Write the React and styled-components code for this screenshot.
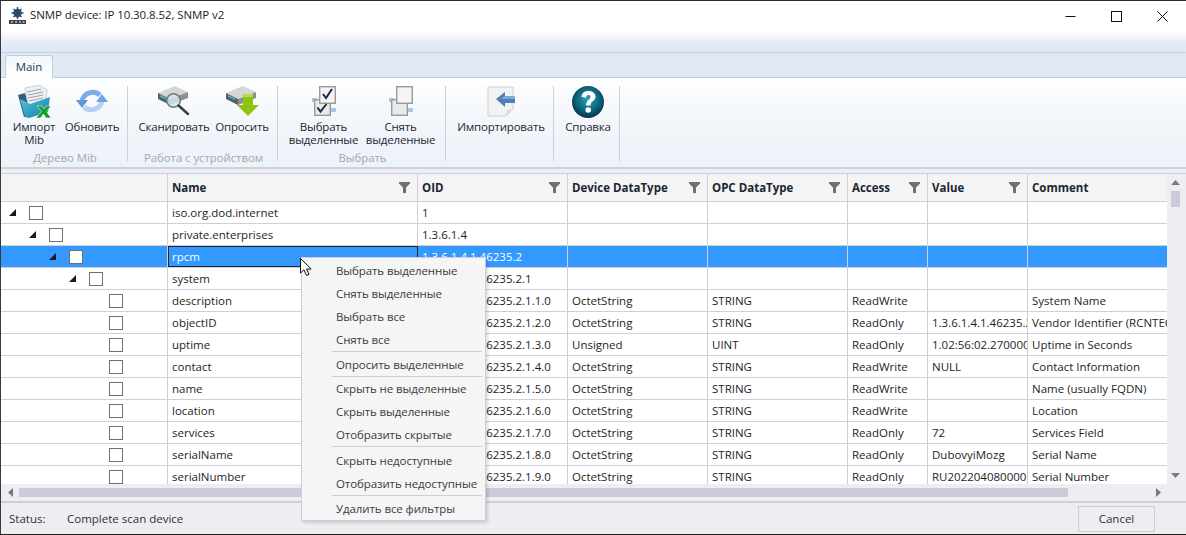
import React from "react";
import styled, { createGlobalStyle } from "styled-components";

const Global = createGlobalStyle`
  html, body { margin: 0; padding: 0; background: #eeeef2; overflow: hidden; }
  * { box-sizing: border-box; }
`;

const Win = styled.div`
  position: relative;
  width: 1186px;
  height: 535px;
  display: flex;
  flex-direction: column;
  overflow: hidden;
  background: #eeeef2;
  border-top: 1px solid #2a2a2a;
  border-bottom: 1px solid #222;
  border-left: 1px solid #3a3a3a;
  font-family: "Open Sans", "Noto Sans", sans-serif;
  font-size: 11.5px;
  color: #1e1e1e;
`;
const TitleBar = styled.div`
  height: 52px;
  flex: none;
  display: flex;
  align-items: flex-start;
  background: linear-gradient(#fff 0, #fff 30px, #e0e9f5 44px, #dfe8f4 100%);
  border-bottom: 1px solid #c3cfde;
`;
const TitleText = styled.div`
  margin: 6px 0 0 4px;
  font-size: 11.5px;
  line-height: 16px;
  letter-spacing: -0.08px;
  flex: 1;
`;
const Logo = styled.svg`
  margin: 6px 0 0 8px;
  flex: none;
`;
const WinButtons = styled.div`
  display: flex;
  margin-right: 1px;
`;
const WinButton = styled.div`
  width: 46px;
  height: 30px;
  display: flex;
  align-items: center;
  justify-content: center;
`;
const TabStrip = styled.div`
  height: 25px;
  flex: none;
  background: #dfe8f4;
  padding: 3px 0 0 4px;
  display: flex;
  align-items: flex-end;
  border-bottom: 1px solid #c3cfde;
`;
const Tab = styled.div`
  width: 48px;
  height: 23px;
  margin-bottom: -1px;
  background: linear-gradient(#f3f7fb, #fff);
  border: 1px solid #c3cfde;
  border-bottom: none;
  border-radius: 3px 3px 0 0;
  text-align: center;
  line-height: 21px;
  font-size: 11.5px;
  color: #1e3a55;
`;
const Ribbon = styled.div`
  height: 91px;
  flex: none;
  display: flex;
  padding-top: 8px;
  background: linear-gradient(#fff 0, #f4f7fb 40%, #edf2f9 100%);
  border-bottom: 2px solid #c9d3e0;
`;
const Group = styled.div`
  height: 75px;
  width: ${(p) => p.$width}px;
  padding-left: ${(p) => p.$pad}px;
  border-right: 1px solid #c9d0da;
`;
const GroupRow = styled.div`
  display: flex;
  height: 65px;
`;
const GroupLabel = styled.div`
  margin-left: ${(p) => -p.$pad + 2}px;
  text-align: center;
  line-height: 14px;
  font-size: 11.4px;
  letter-spacing: -0.05px;
  color: #a3a7ad;
`;
const RibbonBtn = styled.div`
  width: ${(p) => p.$w}px;
  display: flex;
  flex-direction: column;
  align-items: center;
  text-align: center;
`;
const IconBox = styled.div`
  height: 35px;
  margin-top: -1px;
  display: flex;
  align-items: flex-start;
  justify-content: center;
`;
const BtnLabel = styled.div`
  line-height: 13px;
  white-space: pre-line;
  letter-spacing: -0.2px;
  color: #1d2733;
`;
const GridWrap = styled.div`
  flex: none;
  margin-top: 4px;
  height: 328px;
  border-top: 1px solid #cfcfdc;
  display: grid;
  grid-template-columns: 1166px 19px;
  grid-template-rows: 310px 17px;
  background: #eeeef2;
`;
const GridArea = styled.div`
  overflow: hidden;
  background: #fff;
`;
const Row = styled.div`
  display: grid;
  grid-template-columns: 167px 250px 150px 140px 140px 80px 100px 140px;
  height: ${(p) => (p.$head ? 28 : 22)}px;
  background: ${(p) => (p.$head ? "#f4f4f5" : p.$sel ? "#3399ff" : "#fff")};
  border-bottom: 1px solid #cfcfdc;
`;
const Cell = styled.div`
  border-right: 1px solid #cfcfdc;
  padding-left: 4px;
  line-height: 22px;
  white-space: nowrap;
  overflow: hidden;
  color: ${(p) => (p.$sel ? "#fff" : "#1e1e1e")};
  ${(p) => p.$focus && "outline: 1px solid #1c2530; outline-offset: -1px;"}
`;
const TreeCell = styled.div`
  border-right: 1px solid #cfcfdc;
  padding-left: ${(p) => 8 + p.$level * 20}px;
  display: flex;
  align-items: center;
  height: 21px;
`;
const Expander = styled.svg`
  width: 7px;
  height: 7px;
  flex: none;
  margin-right: 13px;
`;
const LeafGap = styled.div`
  width: 20px;
  flex: none;
`;
const Check = styled.div`
  width: 14px;
  height: 14px;
  flex: none;
  background: #fff;
  border: 1px solid #707070;
`;
const HeadCell = styled.div`
  border-right: 1px solid #cfcfdc;
  padding: 0 7px 0 4px;
  display: flex;
  align-items: center;
  justify-content: space-between;
  font-weight: 700;
  font-size: 11.5px;
  color: #1c2733;
`;
const VScroll = styled.div`
  grid-row: 1;
  grid-column: 2;
  background: #eeeef2;
  display: flex;
  flex-direction: column;
  align-items: center;
  padding: 6px 2px 0 0;
`;
const VThumb = styled.div`
  width: 9px;
  height: 16px;
  margin-top: 6px;
  background: #c9cbd9;
`;
const VSpacer = styled.div`
  flex: 1;
`;
const HScroll = styled.div`
  grid-row: 2;
  grid-column: 1 / 3;
  background: #eeeef2;
  display: flex;
  align-items: center;
  padding-left: 7px;
`;
const HThumb = styled.div`
  width: 1049px;
  height: 9px;
  margin-left: 6px;
  background: #c9cbd9;
`;
const Arrow = styled.svg`
  flex: none;
  margin-left: ${(p) => p.$ml || 0}px;
  margin-bottom: ${(p) => p.$mb || 0}px;
`;
const Status = styled.div`
  flex: 1;
  display: flex;
  align-items: center;
  padding: 0 31px 0 8px;
  background: #eeeef2;
  border-top: 2px solid #cfcfdc;
`;
const StatusLabel = styled.div`
  width: 58px;
  color: #2a3340;
`;
const StatusText = styled.div`
  flex: 1;
  color: #2a3340;
`;
const CancelBtn = styled.div`
  width: 77px;
  height: 26px;
  border: 1px solid #cccedb;
  background: #eeeef2;
  text-align: center;
  line-height: 24px;
  color: #2a3340;
`;
const Menu = styled.div`
  position: absolute;
  left: 300px;
  top: 256px;
  width: 185px;
  height: 264px;
  padding: 1px 2px;
  background: #f5f5f5;
  border: 1px solid #cccedb;
  box-shadow: 2px 2px 3px rgba(0,0,0,.14);
`;
const MenuItem = styled.div`
  height: 23px;
  line-height: 23px;
  padding-left: 32px;
  white-space: nowrap;
  letter-spacing: -0.1px;
  color: #3c3c3c;
`;
const MenuSep = styled.div`
  height: 1px;
  margin: 0 1px ${(p) => p.$mb || 0}px 28px;
  background: #cccedb;
`;
const Pointer = styled.svg`
  position: absolute;
  left: 299px;
  top: 257px;
`;

const Funnel = () => (
  <svg width="11" height="11" viewBox="0 0 11 11"><path d="M0 0H11V1.6L7 5.6V11H4V5.6L0 1.6Z" fill="#6f6f6f" /></svg>
);

const ImportIcon = () => (
  <svg width="34" height="34" viewBox="0 0 34 34">
    <defs><linearGradient id="fd" x1="0" y1="0" x2="1" y2="1"><stop offset="0" stopColor="#57c6e2" /><stop offset="1" stopColor="#0f7f9f" /></linearGradient></defs>
    <path d="M1 10L8 8L14 31L7 32Z" fill="#2f5e7e" />
    <path d="M8 3L22 0L30 5L28 20L12 24Z" fill="#eef0f2" stroke="#aab2ba" strokeWidth=".6" />
    <path d="M10 7L24 4M11 10L26 7M11 13L26 10M12 16L26 13" stroke="#9aa3ab" strokeWidth="1" />
    <path d="M3 14L13 19L33 12L31 27L12 33L8 32Z" fill="url(#fd)" />
    <path d="M20 21H25L27 24L29.5 21H34L29.5 26.5L34 33H29L26.5 29L23.5 33H19L24.5 26.5Z" fill="#12a02c" stroke="#fff" strokeWidth=".5" />
  </svg>
);
const RefreshIcon = () => (
  <svg width="32" height="30" viewBox="0 -3 32 30">
    <path d="M24 7A11 11 0 0 0 6 13" fill="none" stroke="#7aace8" strokeWidth="5" />
    <path d="M0 12H12L6 20Z" fill="#5f97dd" />
    <path d="M8 19A11 11 0 0 0 26 13" fill="none" stroke="#b3d1f2" strokeWidth="5" />
    <path d="M20 14H32L26 6Z" fill="#6fa4e4" />
  </svg>
);
const DeviceShape = () => (
  <>
    <path d="M1 8L18 1L31 7L13 14Z" fill="#d4d6d8" />
    <path d="M1 8L13 14V20L1 14Z" fill="#5a6166" />
    <path d="M13 14L31 7V13L13 20Z" fill="#8b9093" />
    <path d="M3 10L10 13.5V15L3 11.5Z" fill="#45c6d4" />
  </>
);
const ScanIcon = () => (
  <svg width="34" height="34" viewBox="0 0 34 34">
    <DeviceShape />
    <circle cx="16.5" cy="15.5" r="6.8" fill="#cfe6e6" fillOpacity=".85" stroke="#70787c" strokeWidth="1.5" />
    <path d="M21.5 20.5L31 29" stroke="#3b3f42" strokeWidth="2.4" strokeLinecap="round" />
  </svg>
);
const PollIcon = () => (
  <svg width="34" height="34" viewBox="0 0 34 34">
    <DeviceShape />
    <path d="M18 9H28V20H34L23 31L12 20H18Z" fill="#8cc414" />
    <path d="M18 9H28V12H18Z" fill="#b4e03a" />
  </svg>
);
const CheckPair = ({ checked }) => (
  <svg width="26" height="31" viewBox="0 0 26 31">
    <path d="M1 13H6V17H1ZM19 23H25V27H19Z" fill="#a8c8e8" />
    <rect x="3.7" y="14.7" width="15.6" height="15.6" fill="#e9e9e9" stroke="#9a9a9a" strokeWidth="1.4" />
    <rect x="8.7" y="1.7" width="15.6" height="16.6" fill="#f4f4f4" stroke="#9a9a9a" strokeWidth="1.4" />
    {checked && <path d="M12 9L15 13L21 4" fill="none" stroke="#1d2a44" strokeWidth="2" />}
    {checked && <path d="M6.5 22.5L9.5 26.5L15.5 19" fill="none" stroke="#1d2a44" strokeWidth="2" />}
  </svg>
);
const ImportDocIcon = () => (
  <svg width="28" height="32" viewBox="0 0 28 32">
    <path d="M1 2H26V24L19 31H1Z" fill="#f2f2f2" stroke="#cfcfcf" />
    <path d="M19 31L20 25L26 24Z" fill="#dcdcdc" />
    <path d="M9 14L18 7V11H28V18H18V22Z" fill="#4f7fb5" />
    <path d="M18 11H28V14H14Z" fill="#7fa9d6" />
  </svg>
);
const HelpIcon = () => (
  <svg width="34" height="34" viewBox="0 0 34 34">
    <defs>
      <radialGradient id="hg" cx=".5" cy=".42" r=".6"><stop offset="0" stopColor="#2aa5b8" /><stop offset=".65" stopColor="#0c5d78" /><stop offset="1" stopColor="#052f42" /></radialGradient>
    </defs>
    <circle cx="17" cy="17" r="16" fill="url(#hg)" />
    <path d="M10.5 12C11 7.5 14 6 17.5 6C22 6 24.5 8.5 24.5 11.5C24.5 16 19.5 16 19.5 20.5H15C14.8 15.5 19.5 14.5 19.5 12C19.5 10.5 18.5 10 17.3 10C16 10 15.2 11 15 12.8Z" fill="#fff" />
    <circle cx="17.2" cy="25" r="2.8" fill="#fff" />
  </svg>
);
const LogoIcon = () => (
  <Logo width="17" height="18" viewBox="0 0 17 18">
    <circle cx="8.5" cy="6" r="4.2" fill="#2c4a6a" />
    <circle cx="8.5" cy="6" r="1.5" fill="#cfd8e2" />
    <path d="M8.5 0V12M2.5 6H14.5M4.5 2L12.5 10M12.5 2L4.5 10" stroke="#2c4a6a" strokeWidth="1.4" />
    <rect x="0" y="13" width="17" height="4" fill="#3a4048" />
    <path d="M2 15H4M6 15H8M10 15H12M13.5 15H15.5" stroke="#fff" strokeWidth="1" />
  </Logo>
);

const columns = ["Name", "OID", "Device DataType", "OPC DataType", "Access", "Value", "Comment"];
const pre = "1.3.6.1.4.1.46235.2.1.";
const rows = [
  { level: 0, exp: 1, name: "iso.org.dod.internet", oid: "1" },
  { level: 1, exp: 1, name: "private.enterprises", oid: "1.3.6.1.4" },
  { level: 2, exp: 1, sel: 1, name: "rpcm", oid: "1.3.6.1.4.1.46235.2" },
  { level: 3, exp: 1, name: "system", oid: "1.3.6.1.4.1.46235.2.1" },
  { level: 4, name: "description", oid: pre + "1.0", dt: "OctetString", opc: "STRING", ac: "ReadWrite", val: "", com: "System Name" },
  { level: 4, name: "objectID", oid: pre + "2.0", dt: "OctetString", opc: "STRING", ac: "ReadOnly", val: "1.3.6.1.4.1.46235.2.1", com: "Vendor Identifier (RCNTEC)" },
  { level: 4, name: "uptime", oid: pre + "3.0", dt: "Unsigned", opc: "UINT", ac: "ReadOnly", val: "1.02:56:02.2700000", com: "Uptime in Seconds" },
  { level: 4, name: "contact", oid: pre + "4.0", dt: "OctetString", opc: "STRING", ac: "ReadWrite", val: "NULL", com: "Contact Information" },
  { level: 4, name: "name", oid: pre + "5.0", dt: "OctetString", opc: "STRING", ac: "ReadWrite", val: "", com: "Name (usually FQDN)" },
  { level: 4, name: "location", oid: pre + "6.0", dt: "OctetString", opc: "STRING", ac: "ReadWrite", val: "", com: "Location" },
  { level: 4, name: "services", oid: pre + "7.0", dt: "OctetString", opc: "STRING", ac: "ReadOnly", val: "72", com: "Services Field" },
  { level: 4, name: "serialName", oid: pre + "8.0", dt: "OctetString", opc: "STRING", ac: "ReadOnly", val: "DubovyiMozg", com: "Serial Name" },
  { level: 4, name: "serialNumber", oid: pre + "9.0", dt: "OctetString", opc: "STRING", ac: "ReadOnly", val: "RU2022040800001", com: "Serial Number" },
];

export default function App() {
  return (
    <Win>
      <Global />
      <TitleBar>
        <LogoIcon />
        <TitleText>SNMP device: IP 10.30.8.52, SNMP v2</TitleText>
        <WinButtons>
          <WinButton>
            <svg width="11" height="11" viewBox="0 0 11 11"><path d="M0.5 5.5H10.5" stroke="#111" /></svg>
          </WinButton>
          <WinButton>
            <svg width="11" height="11" viewBox="0 0 11 11"><rect x=".5" y=".5" width="10" height="10" fill="none" stroke="#111" /></svg>
          </WinButton>
          <WinButton>
            <svg width="11" height="11" viewBox="0 0 11 11"><path d="M.5.5L10.5 10.5M10.5.5L.5 10.5" stroke="#111" /></svg>
          </WinButton>
        </WinButtons>
      </TitleBar>
      <TabStrip><Tab>Main</Tab></TabStrip>
      <Ribbon>
        <Group $width={127} $pad={4}>
          <GroupRow>
            <RibbonBtn $w={58}><IconBox><ImportIcon /></IconBox><BtnLabel>{"Импорт\nMib"}</BtnLabel></RibbonBtn>
            <RibbonBtn $w={58}><IconBox><RefreshIcon /></IconBox><BtnLabel>Обновить</BtnLabel></RibbonBtn>
          </GroupRow>
          <GroupLabel $pad={4}>Дерево Mib</GroupLabel>
        </Group>
        <Group $width={150} $pad={12}>
          <GroupRow>
            <RibbonBtn $w={68}><IconBox><ScanIcon /></IconBox><BtnLabel>Сканировать</BtnLabel></RibbonBtn>
            <RibbonBtn $w={68}><IconBox><PollIcon /></IconBox><BtnLabel>Опросить</BtnLabel></RibbonBtn>
          </GroupRow>
          <GroupLabel $pad={12}>Работа с устройством</GroupLabel>
        </Group>
        <Group $width={168} $pad={7}>
          <GroupRow>
            <RibbonBtn $w={77}><IconBox><CheckPair checked /></IconBox><BtnLabel>{"Выбрать\nвыделенные"}</BtnLabel></RibbonBtn>
            <RibbonBtn $w={77}><IconBox><CheckPair /></IconBox><BtnLabel>{"Снять\nвыделенные"}</BtnLabel></RibbonBtn>
          </GroupRow>
          <GroupLabel $pad={7}>Выбрать</GroupLabel>
        </Group>
        <Group $width={108} $pad={5}>
          <GroupRow>
            <RibbonBtn $w={100}><IconBox><ImportDocIcon /></IconBox><BtnLabel>Импортировать</BtnLabel></RibbonBtn>
          </GroupRow>
        </Group>
        <Group $width={66} $pad={4}>
          <GroupRow>
            <RibbonBtn $w={60}><IconBox><HelpIcon /></IconBox><BtnLabel>Справка</BtnLabel></RibbonBtn>
          </GroupRow>
        </Group>
      </Ribbon>
      <GridWrap>
        <GridArea>
          <Row $head>
            <HeadCell />
            {columns.map((c) => (
              <HeadCell key={c}>{c}{c !== "Comment" && <Funnel />}</HeadCell>
            ))}
          </Row>
          {rows.map((r) => (
            <Row key={r.name} $sel={r.sel}>
              <TreeCell $level={r.level}>
                {r.exp ? (
                  <Expander viewBox="0 0 7 7"><path d="M7 0V7H0Z" fill="#1a1a1a" /></Expander>
                ) : <LeafGap />}
                <Check />
              </TreeCell>
              <Cell $sel={r.sel} $focus={r.sel}>{r.name}</Cell>
              <Cell $sel={r.sel}>{r.oid}</Cell>
              <Cell>{r.dt}</Cell>
              <Cell>{r.opc}</Cell>
              <Cell>{r.ac}</Cell>
              <Cell>{r.val}</Cell>
              <Cell>{r.com}</Cell>
            </Row>
          ))}
        </GridArea>
        <VScroll>
          <Arrow width="9" height="5" viewBox="0 0 9 5"><path d="M4.5 0L9 5H0Z" fill="#7a7a7a" /></Arrow>
          <VThumb />
          <VSpacer />
          <Arrow width="9" height="5" viewBox="0 0 9 5" $mb={6}><path d="M0 0H9L4.5 5Z" fill="#7a7a7a" /></Arrow>
        </VScroll>
        <HScroll>
          <Arrow width="5" height="9" viewBox="0 0 5 9"><path d="M5 0V9L0 4.5Z" fill="#7a7a7a" /></Arrow>
          <HThumb />
          <Arrow width="5" height="9" viewBox="0 0 5 9" $ml={88}><path d="M0 0L5 4.5L0 9Z" fill="#7a7a7a" /></Arrow>
        </HScroll>
      </GridWrap>
      <Status>
        <StatusLabel>Status:</StatusLabel>
        <StatusText>Complete scan device</StatusText>
        <CancelBtn>Cancel</CancelBtn>
      </Status>
      <Menu>
        <MenuItem>Выбрать выделенные</MenuItem>
        <MenuItem>Снять выделенные</MenuItem>
        <MenuItem>Выбрать все</MenuItem>
        <MenuItem>Снять все</MenuItem>
        <MenuSep $mb={1} />
        <MenuItem>Опросить выделенные</MenuItem>
        <MenuSep />
        <MenuItem>Скрыть не выделенные</MenuItem>
        <MenuItem>Скрыть выделенные</MenuItem>
        <MenuItem>Отобразить скрытые</MenuItem>
        <MenuSep $mb={2} />
        <MenuItem>Скрыть недоступные</MenuItem>
        <MenuItem>Отобразить недоступные</MenuItem>
        <MenuSep $mb={1} />
        <MenuItem>Удалить все фильтры</MenuItem>
      </Menu>
      <Pointer width="13" height="19" viewBox="0 0 13 19">
        <path d="M.5.5V15L4 11.8L6.5 17.5L9 16.4L6.6 11H11.2Z" fill="#fff" stroke="#111" strokeWidth="1" />
      </Pointer>
    </Win>
  );
}
